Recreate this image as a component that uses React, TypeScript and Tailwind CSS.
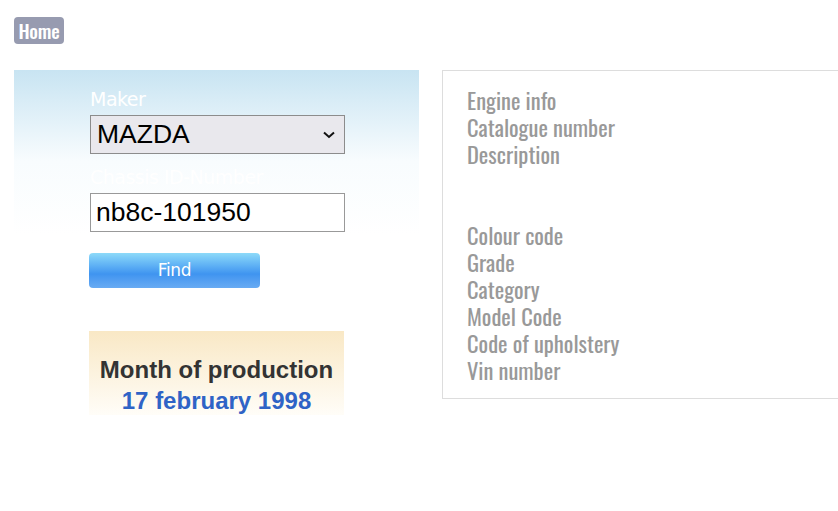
const DETAILS = [
  'Engine info',
  'Catalogue number',
  'Description',
  '',
  '',
  'Colour code',
  'Grade',
  'Category',
  'Model Code',
  'Code of upholstery',
  'Vin number',
];

const NARROW = "font-['Oswald','Liberation_Sans_Narrow','DejaVu_Sans_Condensed',sans-serif]";

export default function App() {
  return (
    <div className="w-[838px] h-[511px] overflow-hidden bg-white">
      <div className="pl-[14px] pt-[17px]">
        <a
          href="#"
          className={`flex items-center justify-center w-[50px] h-[27px] rounded-[4px] bg-[#979bb0] text-white text-[19px] font-medium tracking-[-0.2px] ${NARROW}`}
        >
          Home
        </a>
      </div>

      <div className="flex items-start pl-[14px] mt-[26px]">
        {/* left column: search form */}
        <div className="w-[405px] shrink-0">
          <div className="h-[165px] bg-gradient-to-b from-[#c8e4f2] via-[#f8fcfe] via-55% to-white pl-[76px] pt-[15px]">
            <div className="text-white text-[19px] leading-[28px] font-['DejaVu_Sans','Verdana',sans-serif] tracking-[-0.5px]">
              Maker
            </div>
            <div className="relative mt-[2px] w-[255px] h-[39px] border border-[#8c8c8c] bg-[#e9e8ed]">
              <span className="absolute left-[6px] top-0 leading-[37px] text-[26.5px] text-black font-['Liberation_Sans','Arial',sans-serif]">
                MAZDA
              </span>
              <svg
                className="absolute right-[9px] top-[15px]"
                width="12"
                height="8"
                viewBox="0 0 12 8"
                fill="none"
                stroke="#111"
                strokeWidth="2"
              >
                <path d="M1 1.5 L6 6 L11 1.5" />
              </svg>
            </div>
            <div className="mt-[11px] text-white text-[19px] leading-[24px] font-['DejaVu_Sans','Verdana',sans-serif] tracking-[-0.5px]">
              Chassis ID-Number
            </div>
            <div className="mt-[4px] w-[255px] h-[39px] border border-[#999] bg-white pl-[5px] leading-[37px] text-[26.5px] text-black font-['Liberation_Sans','Arial',sans-serif]">
              nb8c-101950
            </div>
          </div>

          <div className="pl-[75px] mt-[18px]">
            <button className="block w-[171px] h-[35px] rounded-[4px] bg-gradient-to-b from-[#8ddaf9] via-[#3f94f0] via-60% to-[#68abf3] text-white text-[17px] font-['DejaVu_Sans','Verdana',sans-serif] tracking-[-0.3px]">
              Find
            </button>

            <div className="mt-[43px] w-[255px] h-[84px] bg-gradient-to-b from-[#f9e8c5] to-[#fffdf8] flex flex-col items-center pt-[23px] font-['Liberation_Sans','Arial',sans-serif] font-bold text-[24px] leading-[31px]">
              <div className="text-[#333]">Month of production</div>
              <div className="text-[#2f63c6]">17 february 1998</div>
            </div>
          </div>
        </div>

        {/* right column: details */}
        <div className="ml-[23px] w-[420px] shrink-0 h-[329px] border border-[#dddddd] pl-[24px] pt-[16px]">
          {DETAILS.map((label, i) => (
            <div
              key={i}
              className={`h-[27px] leading-[27px] text-[22.5px] text-[#999999] ${NARROW}`}
            >
              {label}
            </div>
          ))}
        </div>
      </div>
    </div>
  );
}
